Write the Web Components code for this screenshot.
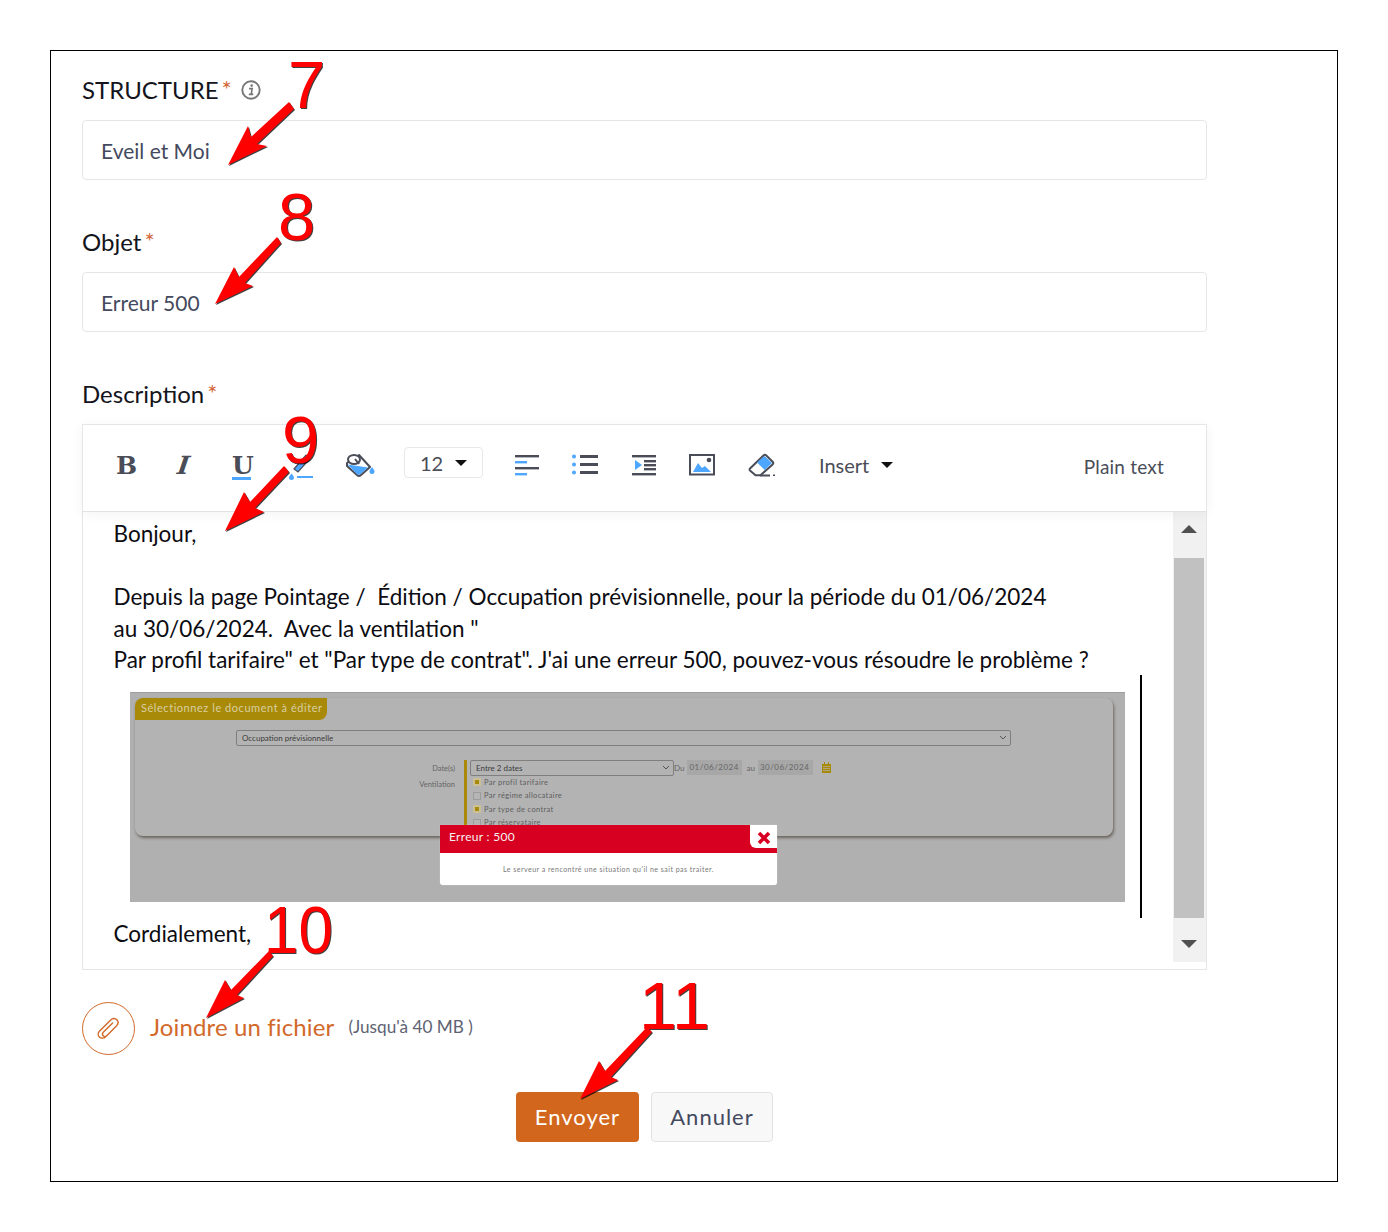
<!DOCTYPE html>
<html lang="fr"><head><meta charset="utf-8"><title>Formulaire</title>
<style>
html,body{margin:0;padding:0;background:#fff}
body{font-family:Lato,"Liberation Sans",sans-serif;width:1388px;height:1232px;overflow:hidden}
</style></head><body>
<x-page>
  <x-field label="STRUCTURE" info><x-input>Eveil et Moi</x-input></x-field>
  <x-field label="Objet"><x-input>Erreur 500</x-input></x-field>
  <x-field label="Description" last>
    <x-toolbar></x-toolbar>
    <x-editor>Bonjour,<br><br>Depuis la page Pointage /&nbsp; Édition / Occupation prévisionnelle, pour la période du 01/06/2024<br>au 30/06/2024.&nbsp; Avec la ventilation "<br>Par profil tarifaire" et "Par type de contrat". J'ai une erreur 500, pouvez-vous résoudre le problème ?</x-editor>
  </x-field>
  <x-attach></x-attach>
  <x-actions></x-actions>
</x-page>
<x-annot></x-annot>
<script>
function def(name, css, html, init){
  customElements.define(name, class extends HTMLElement{
    constructor(){super();const s=this.attachShadow({mode:'open'});s.innerHTML='<style>'+css+'</style>'+html;if(init)init(this,s);}
  });
}
const INK='#4a4d57',BLUE='#4da6ff';

def('x-page',`:host{display:block;box-sizing:border-box;margin:50px 0 0 50px;width:1288px;height:1132px;border:1px solid #000;padding:24px 0 0 31px}`,`<slot></slot>`);

def('x-field',`:host{display:block;width:1125px;margin-bottom:47px}
:host([last]){margin-bottom:0}
.l{display:flex;align-items:center;height:30px;margin-bottom:15px;font-size:24px;line-height:30px;color:#14141c}
.s{color:#d2673a;font-size:24px;margin:-2px 0 0 3px;line-height:20px}
svg{margin-left:9px;display:block}`,
`<div class="l"><span id="t"></span><span class="s">*</span><span id="i"></span></div><slot></slot>`,
(el,s)=>{queueMicrotask(()=>{s.getElementById('t').textContent=el.getAttribute('label');
 if(el.hasAttribute('info'))s.getElementById('i').innerHTML=`<svg width="20" height="20" viewBox="0 0 20 20"><circle cx="10" cy="10" r="8.700" fill="none" stroke="#777" stroke-width="1.900"/><circle cx="10.700" cy="5.600" r="1.300" fill="#777"/><path d="M8 8.600h3.200l-1 5.400h1.600M7.800 14.400h4.400" fill="none" stroke="#777" stroke-width="1.600"/></svg>`;});});

def('x-input',`:host{display:flex;align-items:center;box-sizing:border-box;height:60px;border:1px solid #e6e6e6;border-radius:4px;padding:1px 0 0 18px;font-size:21px;color:#444a5e}`,`<slot></slot>`);

const ICONS={
 high:`<svg width="26" height="30" viewBox="0 0 26 30"><path d="M6 19L18 5l4 3.500L10 22z" fill="${BLUE}" stroke="${INK}" stroke-width="1.200"/><path d="M3.500 23.500c1.500 2 2.500 3 2.500 4a2.500 2.500 0 0 1-5 0c0-1 1-2 2.500-4z" fill="${BLUE}"/><rect x="9" y="26" width="16" height="2" fill="${BLUE}"/></svg>`,
 bucket:`<svg width="30" height="26" viewBox="0 0 30 26"><path d="M2 11L14 3l11 12-9 8a3 3 0 0 1-4 0L2 14z" fill="#fff" stroke="${INK}" stroke-width="2" stroke-linejoin="round"/><path d="M2.500 12.500l20.500 3-7.500 6.500a2.500 2.500 0 0 1-3.500 0z" fill="${BLUE}"/><ellipse cx="9" cy="7.500" rx="6" ry="4.500" fill="#fff" stroke="${INK}" stroke-width="2"/><path d="M10 7l4 5" stroke="${INK}" stroke-width="2"/><path d="M27 15c1.500 2 2.500 3.300 2.500 4.500a2.500 2.500 0 0 1-5 0c0-1.200 1-2.500 2.500-4.500z" fill="${BLUE}"/></svg>`,
 align:`<svg width="24" height="22" viewBox="0 0 24 22"><rect y="1" width="24" height="2.400" fill="${INK}"/><rect y="7" width="12" height="2.400" fill="${BLUE}"/><rect y="13" width="24" height="2.400" fill="${INK}"/><rect y="19" width="12" height="2.400" fill="${BLUE}"/></svg>`,
 list:`<svg width="26" height="22" viewBox="0 0 26 22"><circle cx="2" cy="2.500" r="2" fill="${BLUE}"/><circle cx="2" cy="10.500" r="2" fill="${BLUE}"/><circle cx="2" cy="18.500" r="2" fill="${BLUE}"/><rect x="8" y="1" width="18" height="3" fill="${INK}"/><rect x="8" y="9" width="18" height="3" fill="${INK}"/><rect x="8" y="17" width="18" height="3" fill="${INK}"/></svg>`,
 indent:`<svg width="24" height="22" viewBox="0 0 24 22"><rect y="1" width="24" height="2.400" fill="${INK}"/><path d="M3 6l7 5-7 5z" fill="${BLUE}"/><rect x="12" y="6" width="12" height="2.400" fill="${INK}"/><rect x="12" y="10" width="12" height="2.400" fill="${INK}"/><rect x="12" y="14" width="12" height="2.400" fill="${INK}"/><rect y="19" width="24" height="2.400" fill="${INK}"/></svg>`,
 image:`<svg width="26" height="22" viewBox="0 0 26 22"><rect x="1" y="1" width="24" height="19.500" fill="#fff" stroke="${INK}" stroke-width="2"/><path d="M4 18l5-9 4 5 3-2 6 6z" fill="${BLUE}"/><circle cx="20" cy="6" r="2.300" fill="${INK}"/></svg>`,
 eraser:`<svg width="28" height="24" viewBox="0 0 28 24"><path d="M2 15.500L15.500 2.500a2 2 0 0 1 2.800 0l6.300 6.200a2 2 0 0 1 0 2.800L12.500 22.300H7.500L2 17.500a1.400 1.400 0 0 1 0-2z" fill="#fff" stroke="${INK}" stroke-width="2" stroke-linejoin="round"/><path d="M9 9.500L16.500 3l7.500 7-7.300 7z" fill="${BLUE}"/><path d="M12 22.500h10" stroke="${INK}" stroke-width="2"/><rect x="25" y="21.500" width="2" height="1.500" fill="${INK}"/></svg>`
};
const CARET=`<i class="c"></i>`;
def('x-toolbar',`:host{display:flex;align-items:center;box-sizing:border-box;height:88px;border:1px solid #e6e6e6;border-bottom-color:#e2e2e2;background:#fff;position:relative;z-index:1;box-shadow:0 2px 12px rgba(0,0,0,.05);padding:0 42px 6px 33px;color:${INK}}
.g{display:block;width:19px;text-align:center;font-size:25px;line-height:30px;color:${INK};flex:none}
.b{font:bold 25px "DejaVu Serif",serif}
.i{font:italic bold 25px "DejaVu Serif",serif;margin-left:39px;transform:skewX(-8deg)}
.u{font:bold 25px "DejaVu Serif",serif;margin-left:39px;position:relative}
.u::after{content:"";position:absolute;left:0;right:0;bottom:0;height:2.500px;background:${BLUE}}
svg{display:block;flex:none}
.sel{display:flex;align-items:center;box-sizing:border-box;width:79px;height:31px;border:1px solid #e8e8e8;border-radius:4px;margin-left:29px;margin-top:-5px;padding-left:15px;font-size:20px;flex:none}
.c{display:block;width:0;height:0;border:6px solid transparent;border-top:6px solid #111;border-bottom:0;flex:none}
.ins{margin-left:43px;font-size:20px;display:flex;align-items:center}
.ins .c{margin-left:12px}
.pl{margin-left:auto;font-size:19px;letter-spacing:.2px;position:relative;top:1px}`,
`<span class="g b">B</span><span class="g i">I</span><span class="g u">U</span>
<span style="margin-left:37px">${ICONS.high}</span><span style="margin-left:31px">${ICONS.bucket}</span>
<div class="sel">12<i class="c" style="margin-left:12px"></i></div>
<span style="margin-left:32px">${ICONS.align}</span><span style="margin-left:33px">${ICONS.list}</span><span style="margin-left:34px">${ICONS.indent}</span><span style="margin-left:33px">${ICONS.image}</span><span style="margin-left:33px">${ICONS.eraser}</span>
<div class="ins">Insert${CARET}</div><div class="pl">Plain text</div>`);

def('x-editor',`:host{display:flex;box-sizing:border-box;height:458px;border:1px solid #e6e6e6;border-top:0;position:relative;background:#fff}
.m{flex:1;box-sizing:border-box;padding:6px 0 0 30.500px;font-size:22.500px;line-height:31.500px;color:#0c0c12;white-space:nowrap;min-width:0}
x-shot{margin:16px 0 16px 16.500px}
.caret{position:absolute;left:1057px;top:163px;width:2px;height:243px;background:#000}`,
`<div class="m"><slot></slot><x-shot></x-shot>Cordialement,</div><x-scroll></x-scroll><div class="caret"></div>`);

def('x-scroll',`:host{display:flex;flex-direction:column;align-items:center;box-sizing:border-box;width:33px;height:450px;background:#f1f1f1;padding:0 2px 0 1px;flex:none}
.a{height:46px;box-sizing:border-box;padding-bottom:12px;display:flex;align-items:center;justify-content:center;flex:none}
.t{width:0;height:0;border:8px solid transparent}
.up{border-bottom:8px solid #505050;border-top:0}
.dn{border-top:8px solid #505050;border-bottom:0}
.th{width:30px;height:360px;background:#c1c1c1;flex:none}
.e{flex:1;box-sizing:border-box;padding-top:8px;display:flex;align-items:center;justify-content:center}`,
`<div class="a"><i class="t up"></i></div><div class="th"></div><div class="e"><i class="t dn"></i></div>`);

def('x-shot',`:host{display:block;box-sizing:border-box;position:relative;width:995px;height:210px;background:#b0b0b0;border-top:1px solid #9e9e9e;padding:5px 12px 0 5px;font-family:Lato,"Open Sans",sans-serif;color:#5c5c5c;overflow:hidden;white-space:nowrap;line-height:normal}
.p{box-sizing:border-box;height:138px;background:#b3b3b3;border-radius:8px;box-shadow:1px 2px 3px rgba(70,60,50,.65);overflow:hidden}
.tab{display:flex;align-items:center;width:192px;height:22px;box-sizing:border-box;padding:0 0 2px 6px;background:#a98a08;border-radius:0 0 8px 0;color:#d8cfa0;font-size:11px;letter-spacing:.55px}
.sel{box-sizing:border-box;display:flex;align-items:center;justify-content:space-between;height:16px;border:1px solid #7f7f7f;border-radius:2px;padding:0 3px 0 5px;font-size:8px;color:#3c3c3c}
.big{width:775px;margin:10px 0 0 101px}
.row{display:flex;margin:14px 0 0 0;font-size:7.500px}
.lbl{width:320px;text-align:right;color:#666;flex:none;padding-top:1px;line-height:16px}
.lbl div{height:16px}
.bar{width:3px;height:75px;background:#a98a08;margin-left:9px;flex:none}
.col{margin-left:3px;flex:none}
.sm{width:204px}
.ck{display:flex;align-items:center;height:13.500px;margin-left:3px;gap:3px;font-size:7.500px;letter-spacing:.35px;color:#5e5e5e}
.ck i{display:block;box-sizing:border-box;width:8px;height:8px;border:1px solid #9c9c9c;background:#b5b5b5}
.ck i.on{background:#a98a08;border:2px solid #cbbf94}
.d{display:flex;align-items:center;height:16px;font-size:8px;margin-left:0;color:#666;flex:none}
.d b{font-weight:400;background:#a7a7a7;height:15px;line-height:15px;padding:0 2px;letter-spacing:.5px;width:55px;box-sizing:border-box;margin:0 4px 0 3px}
.cal{margin-left:5px}
.dlg{position:absolute;left:310px;top:132px;width:337px;height:60px;background:#fff;border-radius:0 0 3px 3px;color:#777;font-size:7px;text-align:center;letter-spacing:.48px;box-shadow:0 0 1px rgba(255,255,255,.7)}
.hd{height:28px;box-sizing:border-box;background:#d80020;color:#f4f0f0;font-size:12px;text-align:left;padding:4px 0 0 9px;letter-spacing:.3px;position:relative}
.x{position:absolute;right:0;top:0;width:27px;height:23px;box-sizing:border-box;padding-top:4px;background:#fff;border-radius:0 0 0 6px;display:flex;align-items:center;justify-content:center}
.msg{padding-top:12px}`,
`<div class="p"><div class="tab">Sélectionnez le document à éditer</div>
<div class="sel big"><span>Occupation prévisionnelle</span><svg width="8" height="6" viewBox="0 0 8 6"><path d="M1 1l3 3 3-3" fill="none" stroke="#555" stroke-width="1"/></svg></div>
<div class="row"><div class="lbl"><div>Date(s)</div><div>Ventilation</div></div><div class="bar"></div>
<div class="col"><div class="sel sm"><span>Entre 2 dates</span><svg width="8" height="6" viewBox="0 0 8 6"><path d="M1 1l3 3 3-3" fill="none" stroke="#555" stroke-width="1"/></svg></div>
<div class="ck"><i class="on"></i>Par profil tarifaire</div><div class="ck"><i></i>Par régime allocataire</div><div class="ck"><i class="on"></i>Par type de contrat</div><div class="ck"><i></i>Par réservataire</div></div>
<div class="d">Du<b>01/06/2024</b>au<b>30/06/2024</b><svg class="cal" width="9" height="11" viewBox="0 0 9 11"><path d="M0 2h9v9H0z" fill="#a98a08"/><path d="M2 0h1v3H2zM6 0h1v3H6z" fill="#a98a08"/><path d="M1 4.500h7M1 6.500h7M1 8.500h7" stroke="#b3b3b3" stroke-width=".7"/></svg></div></div></div>
<div class="dlg"><div class="hd">Erreur : 500<div class="x"><svg width="14" height="14" viewBox="0 0 14 14"><path d="M2 2l10 10M12 2L2 12" stroke="#d80020" stroke-width="3.600"/></svg></div></div><div class="msg">Le serveur a rencontré une situation qu'il ne sait pas traiter.</div></div>`);

def('x-attach',`:host{display:flex;align-items:center;height:52px;margin-top:32px;color:#d2692a}
.o{width:53px;height:53px;box-sizing:border-box;border:1px solid #d2692a;border-radius:50%;display:flex;align-items:center;justify-content:center;flex:none}
.t{margin-left:15px;font-size:24px;letter-spacing:.13px;position:relative;top:-2px}
.n{margin-left:14px;font-size:17.200px;color:#5e6272;position:relative;top:-2px}`,
`<div class="o"><svg width="23" height="23" viewBox="0 0 26 26"><path d="M9.500 22.500c-2 2-5.200 1.700-6.800.100-1.700-1.700-1.800-4.600 0-6.500L15.500 3.300c2.300-2.300 5.200-2 6.900-.2 1.700 1.800 1.900 4.600-.2 6.800L11 21.100c-1.200 1.200-3 1.200-4 .2-1-1-1.100-2.700.1-4L17.700 6.900" fill="none" stroke="#d2692a" stroke-width="1.600" stroke-linecap="round"/></svg></div><div class="t">Joindre un fichier</div><div class="n">(Jusqu'à 40 MB )</div>`);

def('x-actions',`:host{display:flex;gap:12px;margin:38px 0 0 434px}
.b{display:flex;align-items:center;justify-content:center;box-sizing:border-box;height:50px;padding-bottom:1px;border-radius:4px;font-size:22px;letter-spacing:1px}
.e{width:123px;background:#d2661d;color:#fff}
.a{width:122px;background:#f8f8f8;border:1px solid #e2e2e2;color:#444a5e}`,
`<div class="b e">Envoyer</div><div class="b a">Annuler</div>`);

const arrow=(p)=>`<polygon points="${p}" fill="#f00"/>`;
def('x-annot',`:host{display:block;position:absolute;left:0;top:0;z-index:5;width:1388px;height:1232px;pointer-events:none}
svg{display:block;overflow:visible}
.sh{filter:drop-shadow(1px 1px 0 rgba(0,0,0,.75))}
text{font-family:"Liberation Sans",Arial,sans-serif;font-size:67px;fill:#f00}`,
`<svg width="1388" height="1232" viewBox="0 0 1388 1232"><g class="sh">
<text x="288" y="108">7</text>
<text x="278" y="240">8</text>
<text x="282" y="463">9</text>
<text x="264" y="953" textLength="69" lengthAdjust="spacingAndGlyphs">10</text>
<text x="639" y="1029" textLength="71" lengthAdjust="spacingAndGlyphs">11</text>
${arrow('228,165 248,126 251,137 289,102 294,109 257,144 267,146')}
${arrow('215,304 234,267 239,277 277,237 281,243 245,283 253,286')}
${arrow('225,531 244,492 250,502 284,466 289,472 255,508 264,512')}
${arrow('206,1018 225,980 231,990 269,951 273,956 237,995 244,998')}
${arrow('580,1099 599,1061 605,1071 647,1027 652,1032 611,1077 618,1080')}
</g></svg>`);
</script>
</body></html>
